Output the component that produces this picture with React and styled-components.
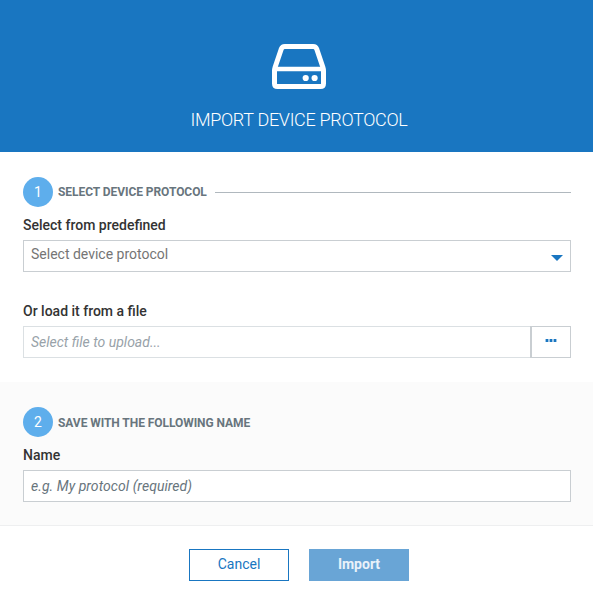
import React from "react";
import styled, { createGlobalStyle } from "styled-components";

const GlobalStyle = createGlobalStyle`
  *, *::before, *::after { box-sizing: border-box; }
  body {
    margin: 0;
    background: #fff;
    color: #333;
    font-family: Roboto, "Liberation Sans", sans-serif;
    font-size: 14px;
  }
`;

const Dialog = styled.form`
  display: flex;
  flex-direction: column;
  width: 100%;
  height: 603px;
  overflow: hidden;
`;

const Header = styled.header`
  display: flex;
  flex-direction: column;
  align-items: center;
  height: 152px;
  padding: 44px 0 0 5px;
  background: #1976c1;
  color: #fff;
`;

const DeviceIcon = styled.svg`
  display: block;
  width: 54px;
  height: 45px;
`;

const Title = styled.h1`
  margin: 19px 0 0;
  font-size: 18px;
  line-height: 24px;
  font-weight: 300;
  letter-spacing: -0.31px;
  white-space: nowrap;
`;

const Section = styled.section`
  height: ${(p) => p.$height};
  padding: 25px 22px 0 23px;
  background: ${(p) => (p.$shaded ? "#fbfbfb" : "#fff")};
  border-bottom: ${(p) => (p.$shaded ? "1px solid #eeeff0" : "none")};
`;

const StepHeading = styled.div`
  display: flex;
  align-items: center;
  height: 30px;
`;

const StepNumber = styled.span`
  flex: none;
  width: 30px;
  height: 30px;
  border-radius: 50%;
  background: #5eaeec;
  color: #fff;
  line-height: 30px;
  text-align: center;
`;

const StepTitle = styled.h2`
  margin: ${(p) => p.$offset || 0} 8px 0 5px;
  color: #68757d;
  font-size: 12px;
  line-height: 16px;
  font-weight: 700;
  letter-spacing: -0.06px;
  white-space: nowrap;
`;

const Rule = styled.span`
  flex: 1;
  height: 1px;
  background: #b0b8be;
`;

const Field = styled.div`
  padding-top: ${(p) => p.$gap};
`;

const Label = styled.label`
  display: block;
  height: 23px;
  line-height: 16px;
  font-weight: 500;
`;

const Control = styled.div`
  display: flex;
  height: 32px;
  border: 1px solid ${(p) => p.$border || "#c9ced2"};
  background: #fff;
`;

const SelectValue = styled.span`
  flex: 1;
  padding-left: 7px;
  color: #757575;
  line-height: 27px;
`;

const Caret = styled.svg`
  flex: none;
  width: 12px;
  height: 6px;
  margin: 14px 7px 0 0;
`;

const TextInput = styled.input`
  flex: 1;
  min-width: 0;
  height: 30px;
  padding: 0 7px;
  border: 0;
  outline: 0;
  background: transparent;
  font: inherit;
  font-style: italic;
  letter-spacing: ${(p) => p.$tracking || "normal"};
  &::placeholder {
    color: ${(p) => p.$hint};
    opacity: 1;
  }
`;

const FileRow = styled.div`
  display: flex;
  ${Control} {
    flex: 1;
    border-right: 0;
  }
`;

const BrowseButton = styled.button`
  display: flex;
  justify-content: center;
  width: 41px;
  height: 32px;
  padding: 12px 0 0;
  border: 1px solid #c9ced2;
  border-left-width: 2px;
  background: #fff;
`;

const Footer = styled.footer`
  display: flex;
  justify-content: center;
  gap: 20px;
  padding: 23px 0 0 5px;
`;

const Button = styled.button`
  width: 100px;
  height: 32px;
  padding: 0 0 2px;
  border: 1px solid ${(p) => (p.$primary ? "#69a5d6" : "#1976c1")};
  background: ${(p) => (p.$primary ? "#69a5d6" : "#fff")};
  color: ${(p) => (p.$primary ? "#e9f2fa" : "#1976c1")};
  font: inherit;
  font-weight: ${(p) => (p.$primary ? 700 : 400)};
`;

export default function App() {
  return (
    <>
      <GlobalStyle />
      <Dialog>
        <Header>
          <DeviceIcon viewBox="0 0 54 45" fill="none" stroke="#fff" strokeWidth="5" strokeLinejoin="round">
            <path d="M2.5 27 Q2.5 25 3.1 23.2 L9.2 5.2 Q10.2 2.5 12.8 2.5 H41.2 Q43.8 2.5 44.8 5.2 L50.9 23.2 Q51.5 25 51.5 27 V39.5 Q51.5 42.5 48.5 42.5 H5.5 Q2.5 42.5 2.5 39.5 Z" />
            <path d="M3 25 H51" strokeWidth="4.6" />
            <circle cx="33.7" cy="34" r="3.1" fill="#fff" stroke="none" />
            <circle cx="42.6" cy="34" r="3.1" fill="#fff" stroke="none" />
          </DeviceIcon>
          <Title>IMPORT DEVICE PROTOCOL</Title>
        </Header>

        <Section $height="230px">
          <StepHeading>
            <StepNumber>1</StepNumber>
            <StepTitle>SELECT DEVICE PROTOCOL</StepTitle>
            <Rule />
          </StepHeading>
          <Field $gap="10px">
            <Label>Select from predefined</Label>
            <Control>
              <SelectValue>Select device protocol</SelectValue>
              <Caret viewBox="0 0 12 6">
                <path d="M0 0H12L6 6Z" fill="#1976c1" />
              </Caret>
            </Control>
          </Field>
          <Field $gap="31px">
            <Label htmlFor="file">Or load it from a file</Label>
            <FileRow>
              <Control $border="#dbe0e3">
                <TextInput id="file" placeholder="Select file to upload..." $hint="#98a2a9" />
              </Control>
              <BrowseButton type="button" aria-label="Browse">
                <svg width="12" height="3" viewBox="0 0 12 3" fill="#1976c1">
                  <path d="M0.6 0h2.8v3H0.6zM4.6 0h2.8v3H4.6zM8.6 0h2.8v3H8.6z" />
                </svg>
              </BrowseButton>
            </FileRow>
          </Field>
        </Section>

        <Section $shaded $height="144px">
          <StepHeading>
            <StepNumber>2</StepNumber>
            <StepTitle $offset="2px">SAVE WITH THE FOLLOWING NAME</StepTitle>
          </StepHeading>
          <Field $gap="10px">
            <Label htmlFor="name">Name</Label>
            <Control>
              <TextInput
                id="name"
                placeholder="e.g. My protocol (required)"
                $hint="#68757d"
                $tracking="0.06px"
              />
            </Control>
          </Field>
        </Section>

        <Footer>
          <Button type="button">Cancel</Button>
          <Button type="button" $primary>Import</Button>
        </Footer>
      </Dialog>
    </>
  );
}
